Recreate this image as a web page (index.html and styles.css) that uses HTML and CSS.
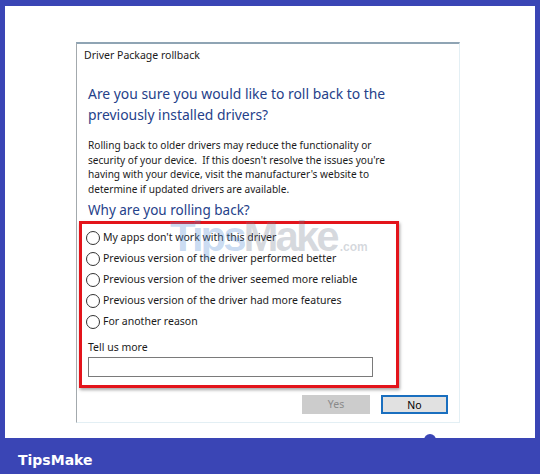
FILE: index.html
```html
<!DOCTYPE html>
<html>
<head>
<meta charset="utf-8">
<link rel="stylesheet" href="styles.css">
</head>
<body>
<div class="page">
  <div class="canvas">
    <div class="dialog">
      <div class="title">Driver Package rollback</div>
      <h1 class="main">Are you sure you would like to roll back to the previously installed drivers?</h1>
      <p class="desc">Rolling back to older drivers may reduce the functionality or security of your device.&nbsp; If this doesn't resolve the issues you're having with your device, visit the manufacturer's website to determine if updated drivers are available.</p>
      <h2 class="sub">Why are you rolling back?</h2>
      <div class="annot">
        <label class="opt"><span class="radio"></span>My apps don't work with this driver</label>
        <label class="opt"><span class="radio"></span>Previous version of the driver performed better</label>
        <label class="opt"><span class="radio"></span>Previous version of the driver seemed more reliable</label>
        <label class="opt"><span class="radio"></span>Previous version of the driver had more features</label>
        <label class="opt"><span class="radio"></span>For another reason</label>
        <div class="more">Tell us more</div>
        <div class="input"></div>
        <div class="watermark"><span class="wm-tips">Tips</span><span class="wm-make">Make</span><span class="wm-com">.com</span></div>
      </div>
      <div class="buttons">
        <div class="btn btn-yes">Yes</div>
        <div class="btn btn-no">No</div>
      </div>
    </div>
  </div>
  <div class="footer">
    <span class="brand">TipsMake</span>
    <span class="bump"></span>
  </div>
</div>
</body>
</html>
```
FILE: styles.css
```css
html, body {
  margin: 0;
  padding: 0;
}
body {
  width: 540px;
  height: 474px;
  overflow: hidden;
  font-family: "Noto Sans", "Open Sans", sans-serif;
}
.page {
  width: 540px;
  height: 474px;
  background: #3a45b5;
  display: flex;
  flex-direction: column;
}
.canvas {
  margin: 6px 5px 0 5px;
  height: 432px;
  background: #ffffff;
  padding: 36px 0 0 71px;
  box-sizing: border-box;
}
.dialog {
  width: 384px;
  height: 381px;
  box-sizing: border-box;
  border-top: 2px solid #8fa4b4;
  border-left: 1px solid #a3a9ad;
  border-right: 1px solid #e3eff4;
  border-bottom: 1px solid #e3eff4;
  padding: 4px 11px 0 11px;
  display: flex;
  flex-direction: column;
  color: #1b1b1b;
}
.title {
  font-size: 10.5px;
  line-height: 14px;
  margin-left: -4px;
}
.main {
  margin: 21px 0 0 0;
  font-size: 13.9px;
  line-height: 21px;
  font-weight: normal;
  color: #25418a;
  width: 330px;
}
.desc {
  margin: 13px 0 0 0;
  font-size: 10.1px;
  line-height: 14.5px;
  width: 312px;
}
.sub {
  margin: 5px 0 0 0;
  font-size: 13.5px;
  line-height: 18px;
  font-weight: normal;
  color: #25418a;
}
.annot {
  position: relative;
  margin: 2px 0 0 -9px;
  width: 320px;
  height: 167px;
  box-sizing: border-box;
  border: 3px solid #e3141b;
  box-shadow: 1px 2px 3px rgba(0, 0, 0, 0.35);
  padding: 3px 0 0 4px;
  display: flex;
  flex-direction: column;
}
.opt {
  display: flex;
  align-items: center;
  height: 21px;
  font-size: 10.5px;
  line-height: 21px;
}
.radio {
  width: 12px;
  height: 12px;
  border: 1px solid #333333;
  border-radius: 50%;
  background: #ffffff;
  margin-right: 3px;
  flex: none;
}
.more {
  margin: 8px 0 0 2px;
  font-size: 10.5px;
  line-height: 14px;
}
.input {
  margin: 3px 0 0 2px;
  width: 285px;
  height: 20px;
  box-sizing: border-box;
  border: 1px solid #7a7a7a;
  background: #ffffff;
}
.watermark {
  position: absolute;
  left: 88px;
  top: -11px;
  font-family: "Liberation Sans", Arial, sans-serif;
  font-weight: bold;
  font-size: 42px;
  letter-spacing: -3px;
  line-height: 48px;
  pointer-events: none;
  white-space: nowrap;
}
.wm-tips {
  color: rgba(90, 145, 215, 0.32);
}
.wm-make {
  color: rgba(110, 120, 140, 0.28);
}
.wm-com {
  font-size: 12px;
  letter-spacing: 0;
  margin-left: 3px;
  color: rgba(110, 120, 140, 0.3);
}
.buttons {
  margin-top: auto;
  margin-bottom: 8px;
  display: flex;
  justify-content: flex-end;
  gap: 11px;
}
.btn {
  height: 19px;
  box-sizing: border-box;
  font-size: 10.5px;
  line-height: 16px;
  text-align: center;
}
.btn-yes {
  width: 68px;
  background: #cccccc;
  border: 1px solid #cccccc;
  color: #8a8a8a;
  line-height: 17px;
}
.btn-no {
  width: 67px;
  background: #e1e1e1;
  border: 2px solid #1a6fbf;
  color: #000000;
}
.footer {
  position: relative;
  height: 36px;
  padding: 10px 0 0 18px;
  box-sizing: border-box;
}
.brand {
  font-family: "DejaVu Sans", Verdana, sans-serif;
  font-weight: bold;
  font-size: 14px;
  line-height: 16px;
  color: #ffffff;
}
.bump {
  position: absolute;
  left: 424px;
  top: -4px;
  width: 12px;
  height: 8px;
  border-radius: 6px 6px 0 0;
  background: #3a45b5;
}
```
